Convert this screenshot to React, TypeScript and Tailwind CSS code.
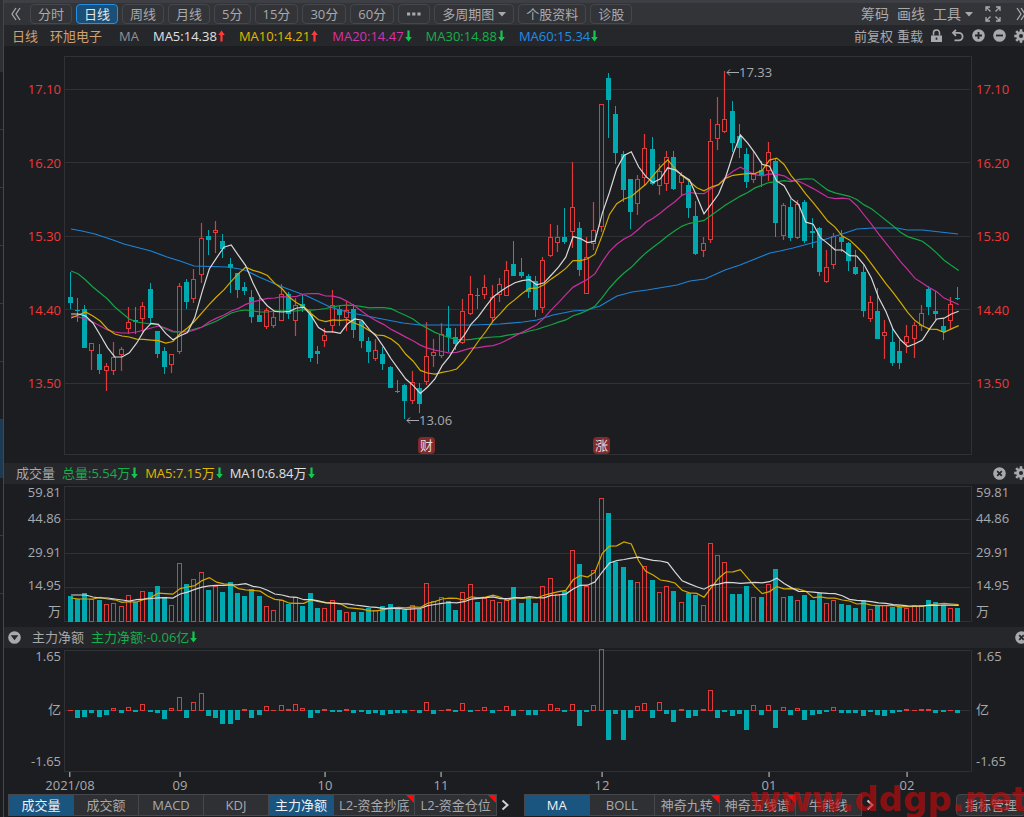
import type { ReactNode } from "react";
import { clsx } from "clsx";

// Each day: direction, high, body top, body bottom, low (chart units, y down),
// volume and main-force net flow (both in px above their baselines)
type Day = [dir: 0 | 1, high: number, top: number, bottom: number, low: number, vol: number, net: number];

const DAYS: Day[] = [
  [0, 272, 297, 303, 309, 26, 0], [0, 298, 310, 311, 322, 23, -8], [0, 305, 309, 348, 348, 29, -7],
  [1, 343, 343, 351, 370, 23, -3], [0, 344, 354, 370, 374, 22, -7], [1, 363, 366, 371, 391, 18, -5],
  [1, 342, 357, 371, 375, 19, 2], [1, 347, 349, 355, 371, 16, -3], [1, 307, 322, 329, 334, 27, 3],
  [0, 307, 320, 322, 334, 20, -2], [1, 302, 306, 319, 332, 31, 6], [0, 283, 289, 318, 324, 30, -2],
  [0, 331, 331, 354, 358, 36, -3], [0, 347, 351, 367, 374, 25, -9], [1, 354, 354, 365, 373, 17, 2],
  [1, 283, 286, 352, 354, 59, 13], [0, 279, 282, 302, 309, 38, -8], [1, 269, 279, 299, 303, 43, 8],
  [1, 223, 238, 275, 283, 50, 17], [0, 230, 236, 240, 255, 32, -6], [1, 221, 230, 233, 253, 36, -8],
  [0, 234, 241, 249, 258, 30, -14], [0, 258, 264, 268, 293, 40, -14], [0, 273, 273, 290, 298, 29, -10],
  [0, 282, 287, 291, 295, 26, 1], [0, 290, 297, 317, 323, 33, -8], [0, 298, 315, 322, 322, 26, -5],
  [1, 308, 310, 327, 329, 16, 4], [1, 312, 317, 326, 328, 12, 0], [1, 284, 294, 321, 321, 22, 5],
  [0, 292, 294, 314, 319, 18, 1], [1, 298, 305, 321, 336, 25, 6], [0, 294, 304, 307, 312, 16, 2],
  [0, 311, 314, 358, 362, 29, -8], [0, 346, 351, 354, 364, 14, -3], [1, 328, 335, 341, 347, 14, 1],
  [1, 290, 305, 326, 333, 22, -2], [0, 305, 309, 315, 326, 12, -2], [1, 302, 310, 318, 331, 10, 1],
  [0, 304, 309, 330, 338, 10, -3], [0, 320, 321, 341, 348, 10, -2], [0, 337, 341, 352, 363, 14, -4],
  [1, 339, 350, 359, 361, 12, -3], [0, 347, 354, 364, 370, 16, -5], [0, 366, 367, 388, 388, 18, -4],
  [0, 380, 391, 392, 393, 13, -3], [0, 384, 385, 401, 419, 12, -3], [1, 371, 382, 401, 404, 17, 0],
  [0, 383, 388, 404, 413, 13, -3], [1, 322, 356, 382, 385, 39, 8], [1, 339, 352, 356, 367, 21, -4],
  [1, 323, 334, 356, 358, 25, 0], [0, 306, 328, 337, 352, 21, 1], [0, 328, 337, 344, 350, 12, -2],
  [1, 299, 311, 343, 344, 30, 7], [1, 276, 294, 314, 315, 38, -2], [0, 288, 295, 296, 309, 20, 0],
  [1, 275, 287, 295, 299, 24, 3], [1, 285, 297, 318, 322, 22, -3], [1, 278, 284, 295, 302, 20, 0],
  [1, 261, 270, 296, 296, 22, 4], [0, 241, 264, 276, 276, 35, -6], [0, 258, 272, 276, 278, 19, 0],
  [0, 274, 276, 292, 298, 25, -5], [0, 276, 281, 310, 317, 19, -5], [1, 257, 260, 308, 313, 36, 0],
  [1, 224, 237, 256, 257, 44, 6], [1, 225, 237, 243, 252, 28, 2], [0, 208, 237, 242, 244, 31, -2],
  [1, 162, 207, 232, 248, 72, 6], [0, 222, 228, 270, 276, 58, -16], [1, 237, 257, 294, 294, 36, -2],
  [1, 202, 230, 244, 250, 52, 5], [1, 104, 104, 227, 232, 124, 61], [0, 73, 78, 100, 138, 109, -30],
  [0, 106, 114, 153, 164, 60, -4], [0, 151, 154, 190, 202, 55, -30], [0, 179, 179, 212, 229, 42, -8],
  [1, 175, 179, 204, 215, 40, 4], [1, 134, 148, 178, 186, 56, 7], [0, 137, 149, 184, 185, 42, -8],
  [1, 164, 171, 186, 195, 30, 8], [1, 151, 157, 184, 191, 36, -4], [0, 151, 157, 189, 190, 31, -12],
  [1, 172, 175, 183, 196, 20, 1], [0, 180, 185, 208, 218, 29, -8], [0, 201, 216, 254, 255, 27, -6],
  [1, 237, 243, 251, 257, 17, 1], [1, 119, 141, 240, 243, 79, 20], [1, 97, 124, 139, 150, 67, -8],
  [1, 71, 119, 132, 133, 60, -2], [0, 101, 111, 143, 152, 28, -6], [0, 124, 136, 148, 158, 28, -4],
  [0, 148, 154, 182, 188, 36, -20], [1, 151, 174, 180, 183, 25, 5], [0, 161, 170, 175, 187, 25, -5],
  [1, 142, 152, 171, 181, 38, 5], [0, 159, 161, 223, 237, 53, -18], [1, 203, 205, 236, 240, 25, 3],
  [0, 199, 207, 238, 241, 26, -5], [1, 200, 204, 238, 239, 22, 2], [0, 200, 202, 241, 243, 27, -10],
  [0, 218, 231, 233, 248, 22, -5], [0, 227, 228, 272, 276, 29, -4], [1, 250, 267, 282, 283, 19, -2],
  [1, 233, 236, 265, 269, 22, 3], [0, 230, 237, 242, 252, 18, -3], [0, 242, 243, 261, 271, 17, -3],
  [0, 250, 267, 274, 275, 14, -3], [0, 265, 272, 311, 317, 22, -6], [1, 296, 302, 319, 322, 13, -2],
  [0, 288, 311, 339, 339, 16, -5], [1, 320, 332, 336, 359, 17, -6], [0, 328, 342, 363, 366, 15, -3],
  [0, 340, 351, 363, 369, 15, -2], [1, 325, 336, 343, 353, 14, 1], [1, 322, 325, 339, 358, 17, 0],
  [1, 305, 313, 326, 331, 17, 1], [0, 286, 289, 307, 315, 22, 1], [0, 291, 311, 314, 320, 20, -3],
  [0, 318, 326, 332, 340, 17, -2], [1, 297, 304, 321, 329, 14, 0], [0, 287, 298, 299, 300, 14, -3],
];

// Averages for the first days, whose history lies left of the chart
const SEED5 = [314, 314, 316, 323];
const SEED10 = [318, 315, 312, 316, 321, 329, 334, 336, 337];
const SEED20 = [316, 317, 319, 322, 326, 330, 332, 333, 333, 332, 330, 328, 326, 328, 331, 332, 332, 330, 327];
const SEED30 = [
  271, 274, 280, 287, 293, 299, 307, 313, 319, 322, 323, 324, 325, 329, 332, 332, 331, 329, 327, 324, 321, 317, 313,
  311, 310, 311, 312, 312, 311,
];
const MA60 =
  "71,229 82,231 95,234 113,240 124,244 151,251 167,257 180,261 194,266 227,267 240,269 247,271 259,277 280,286 307,296 330,307 347,312 377,318 403,323 420,325 440,325 473,325 500,324 523,322 537,320 553,315 573,311 587,310 600,306 617,296 632,292 647,290 677,285 690,281 705,279 725,270 740,265 755,259 770,253 780,251 793,248 823,240 842,234 857,229 873,228 897,228 907,230 923,230 940,232 958,234";

const x = (i: number) => 70.6 + i * 7.275;

function average(values: number[], span: number, seed: number[]) {
  return values
    .map((_, i) => {
      const y =
        i < span - 1
          ? seed[i]
          : values.slice(i - span + 1, i + 1).reduce((a, b) => a + b, 0) / span;
      return `${(x(i) + 0.5).toFixed(1)},${y.toFixed(1)}`;
    })
    .join(" ");
}

const closes = DAYS.map(([up, , top, bottom]) => (up ? top : bottom));
const volumes = DAYS.map((d) => 622 - d[5]);

const PRICE_LINES = [
  { points: MA60, color: "#1c84d8" },
  { points: average(closes, 30, SEED30), color: "#12a544" },
  { points: average(closes, 20, SEED20), color: "#c72f9c" },
  { points: average(closes, 10, SEED10), color: "#d3ab00" },
  { points: average(closes, 5, SEED5), color: "#d8d8d8" },
];
const VOLUME_LINES = [
  { points: average(volumes, 5, [598, 599, 599, 599]), color: "#d3ab00" },
  { points: average(volumes, 10, [595, 595, 595, 597, 598, 598, 599, 600, 601]), color: "#d8d8d8" },
];

const MONTHS = [
  { at: 70, label: "2021/08" },
  { at: 180, label: "09" },
  { at: 325, label: "10" },
  { at: 441, label: "11" },
  { at: 602, label: "12" },
  { at: 769, label: "01" },
  { at: 907, label: "02" },
];

const UP = "#e23a3a";
const DOWN = "#00a9b0";
const GRID = "#303135";

const left = (px: number) => `${((px - 64) / 908) * 100}%`;

function TrendArrow({ up }: { up?: boolean }) {
  return (
    <svg viewBox="0 0 7 12" className={clsx("h-3 w-[7px]", up ? "text-[#ff3b3b]" : "rotate-180 text-[#12c950]")}>
      <path d="M3.5 0.5 6.8 5H4.6v6.5H2.4V5H0.2z" fill="currentColor" />
    </svg>
  );
}

function Reading({ up, className, children }: { up?: boolean; className: string; children: ReactNode }) {
  return (
    <span className={clsx("flex items-center gap-px whitespace-nowrap", className)}>
      {children}
      <TrendArrow up={up} />
    </span>
  );
}

function Chevrons({ right }: { right?: boolean }) {
  return (
    <svg viewBox="0 0 12 14" className={clsx("h-3.5 w-3", right && "rotate-180")} fill="none" stroke="currentColor" strokeWidth="1.3">
      <path d="M6 1 2 7l4 6M10 1 6 7l4 6" />
    </svg>
  );
}

function Caret() {
  return (
    <svg viewBox="0 0 8 5" className="h-[5px] w-2" fill="currentColor">
      <path d="M0 0h8L4 4.6z" />
    </svg>
  );
}

function Gear() {
  return (
    <svg viewBox="0 0 14 14" className="size-3.5">
      {[0, 45, 90, 135].map((deg) => (
        <rect key={deg} x="5.7" y="0.2" width="2.6" height="13.6" fill="currentColor" transform={`rotate(${deg} 7 7)`} />
      ))}
      <circle cx="7" cy="7" r="4.8" fill="currentColor" />
      <circle cx="7" cy="7" r="2" fill="#26272b" />
    </svg>
  );
}

function Disc({ d, solid }: { d: string; solid?: boolean }) {
  return (
    <svg viewBox="0 0 13 13" className="size-[13px]">
      <circle cx="6.5" cy="6.5" r="6.3" fill="currentColor" />
      <path d={d} stroke="#26272b" strokeWidth="1.8" fill={solid ? "#26272b" : "none"} />
    </svg>
  );
}

const CROSS = "M4.2 4.2l4.6 4.6M8.8 4.2 4.2 8.8";

function ToolButton({ label, active, children }: { label?: string; active?: boolean; children: ReactNode }) {
  return (
    <button
      aria-label={label}
      className={clsx(
        "flex h-5 shrink-0 items-center gap-1 rounded-sm border px-[7px] whitespace-nowrap",
        active ? "border-[#2190e6] bg-[#1a4f78] text-[#e6e6e6]" : "border-[#46474c] bg-[#333438]",
      )}
    >
      {children}
    </button>
  );
}

function TopBar() {
  return (
    <div className="flex h-[25px] items-center overflow-hidden border-t-[3px] border-[#3e3f44] bg-[#333438] pl-1.5">
      <button aria-label="收起" className="mr-2 flex">
        <Chevrons />
      </button>
      <div className="flex gap-1">
        <ToolButton>分时</ToolButton>
        <ToolButton active>日线</ToolButton>
        <ToolButton>周线</ToolButton>
        <ToolButton>月线</ToolButton>
        <ToolButton>5分</ToolButton>
        <ToolButton>15分</ToolButton>
        <ToolButton>30分</ToolButton>
        <ToolButton>60分</ToolButton>
        <ToolButton label="更多">
          <svg viewBox="0 0 16 4" className="h-1 w-4" fill="currentColor">
            <path d="M1 .5h3.2v3H1zM6.2.5h3.2v3H6.2zM11.4.5h3.2v3h-3.2z" />
          </svg>
        </ToolButton>
        <ToolButton>
          多周期图
          <Caret />
        </ToolButton>
        <ToolButton>个股资料</ToolButton>
        <ToolButton>诊股</ToolButton>
      </div>
      <div className="-mr-[3px] ml-auto flex items-center text-sm">
        <button className="mr-2">筹码</button>
        <button className="mr-2">画线</button>
        <button className="mr-3 flex items-center gap-1">
          工具
          <Caret />
        </button>
        <button aria-label="全屏" className="mr-3.5">
          <svg viewBox="0 0 16 16" className="size-4" fill="none" stroke="currentColor" strokeWidth="1.3">
            <path d="M1 5V1h4M1 1l4.5 4.5M11 1h4v4M15 1l-4.5 4.5M1 11v4h4M1 15l4.5-4.5M15 11v4h-4M15 15l-4.5-4.5" />
          </svg>
        </button>
        <button aria-label="展开">
          <Chevrons right />
        </button>
      </div>
    </div>
  );
}

function InfoBar() {
  return (
    <div className="flex h-[21px] items-center overflow-hidden bg-[#26272b] pl-2">
      <span className="text-[#d0a070]">日线</span>
      <span className="ml-3 text-[#d0a070]">环旭电子</span>
      <span className="mr-3.5 ml-[17px] text-[#909195]">MA</span>
      <div className="flex gap-3.5">
        <Reading up className="text-[#e0e0e0]">MA5:14.38</Reading>
        <Reading up className="text-[#e0b800]">MA10:14.21</Reading>
        <Reading className="text-[#d633a8]">MA20:14.47</Reading>
        <Reading className="text-[#14b04a]">MA30:14.88</Reading>
        <Reading className="text-[#1f8de6]">MA60:15.34</Reading>
      </div>
      <div className="-mr-1 ml-auto flex items-center gap-2">
        <button className="-mr-1">前复权</button>
        <button className="-mr-px">重载</button>
        <button aria-label="锁定">
          <svg viewBox="0 0 13 14" className="h-3.5 w-[13px]">
            <path d="M3.5 6.5V4.2a3 3 0 0 1 6-.4v2.7" fill="none" stroke="currentColor" strokeWidth="1.5" />
            <path d="M1 6.5h11V13H1z" fill="currentColor" />
            <path d="M5.7 8.6h1.6v2.2H5.7z" fill="#26272b" />
          </svg>
        </button>
        <button aria-label="撤销">
          <svg viewBox="0 0 13 13" className="size-[13px]" fill="none" stroke="currentColor" strokeWidth="1.8">
            <path d="M5 .8 2 3.8l3 3M2.2 3.8h5.6a3.8 3.8 0 0 1 0 7.6H3.5" />
          </svg>
        </button>
        <button aria-label="放大">
          <Disc d="M6.5 3v7M3 6.5h7" />
        </button>
        <button aria-label="缩小">
          <Disc d="M3 6.5h7" />
        </button>
        <button aria-label="设置">
          <Gear />
        </button>
      </div>
    </div>
  );
}

function Frame({ top, height, lines, children }: { top: number; height: number; lines: number[]; children: ReactNode }) {
  return (
    <>
      <g stroke={GRID} fill="none">
        <path d={`M64.5 ${top + 0.5}H970.5M64.5 ${top + height - 0.5}H970.5M64.5 ${top}v${height}M971.5 ${top}v${height}`} />
        {lines.map((y) => (
          <path key={y} d={`M65 ${y + 0.5}H970`} />
        ))}
      </g>
      {children}
    </>
  );
}

function Lines({ lines }: { lines: { points: string; color: string }[] }) {
  return lines.map((l) => <polyline key={l.color} points={l.points} fill="none" stroke={l.color} strokeWidth="1.2" />);
}

function PricePanel() {
  const labels = ["17.10", "16.20", "15.30", "14.40", "13.50"];
  const scale = "flex h-[337px] flex-col justify-between pt-[23px] leading-5";
  return (
    <section className="flex pt-2.5 pb-2 text-[#f03838]">
      <div className={clsx(scale, "w-[60px] pr-[3px] text-right")}>
        {labels.map((l) => (
          <span key={l}>{l}</span>
        ))}
      </div>
      <div className="relative min-w-0 flex-1 text-[#a8a9ac]">
        <svg viewBox="64 56 908 399" preserveAspectRatio="none" className="block h-[399px] w-full">
          <Frame top={56} height={399} lines={[89, 162, 236, 309, 383]}>
            {DAYS.map(([up, high, top, bottom, low], i) => {
              const c = Math.round(x(i));
              const h = Math.max(bottom - top, 1);
              return up ? (
                <g key={i} stroke={UP} fill="none">
                  <path d={`M${c - 0.5} ${high}V${top}M${c - 0.5} ${bottom}V${low}`} strokeWidth="1.2" />
                  <rect x={c - 2.5} y={top + 0.5} width="4" height={Math.max(h - 1, 1)} />
                </g>
              ) : (
                <g key={i} fill={DOWN}>
                  <rect x={c - 1} y={high} width="1" height={low - high} />
                  <rect x={c - 3} y={top} width="5" height={h} />
                </g>
              );
            })}
            <Lines lines={PRICE_LINES} />
          </Frame>
        </svg>
        <Callout at={726} top={6}>17.33</Callout>
        <Callout at={406} top={354}>13.06</Callout>
        <Flag at={418}>财</Flag>
        <Flag at={593}>涨</Flag>
      </div>
      <div className={clsx(scale, "w-[52px] pl-1")}>
        {labels.map((l) => (
          <span key={l}>{l}</span>
        ))}
      </div>
    </section>
  );
}

function Callout({ at, top, children }: { at: number; top: number; children: ReactNode }) {
  return (
    <span className="absolute flex items-center leading-5" style={{ left: left(at), top }}>
      <svg viewBox="0 0 13 8" className="h-2 w-[13px]" fill="none" stroke="currentColor">
        <path d="M4 1.5 1 4.5l3 3M1 4.5h12" />
      </svg>
      {children}
    </span>
  );
}

function Flag({ at, children }: { at: number; children: ReactNode }) {
  return (
    <span
      className="absolute bottom-px size-[17px] rounded-sm bg-[#842a2d] text-center leading-4 text-[#e4dcdc]"
      style={{ left: left(at) }}
    >
      {children}
    </span>
  );
}

function VolumePanel() {
  const labels = ["59.81", "44.86", "29.91", "14.95", "万"];
  const rows = "grid grid-rows-[26px_34px_33px_26px_16px] leading-4";
  return (
    <section>
      <header className="flex h-[21px] items-center gap-[7px] overflow-hidden bg-[#26272b] pb-px pl-3">
        <h2 className="text-[#a8a9ac]">成交量</h2>
        <Reading className="text-[#14b04a]">总量:5.54万</Reading>
        <Reading className="text-[#e0b800]">MA5:7.15万</Reading>
        <Reading className="text-[#e0e0e0]">MA10:6.84万</Reading>
        <div className="-mr-1 ml-auto flex items-center gap-2">
          <button aria-label="关闭成交量">
            <Disc d={CROSS} />
          </button>
          <button aria-label="成交量设置">
            <Gear />
          </button>
        </div>
      </header>
      <div className="flex pb-1">
        <div className={clsx(rows, "w-[60px] pr-[3px] text-right")}>
          {labels.map((l) => (
            <span key={l}>{l}</span>
          ))}
        </div>
        <svg viewBox="64 484 908 139" preserveAspectRatio="none" className="block h-[139px] min-w-0 flex-1">
          <Frame top={486} height={136} lines={[519, 553, 587]}>
            {DAYS.map(([up, , , , , vol], i) => {
              const c = Math.round(x(i));
              return up ? (
                <rect key={i} x={c - 2.5} y={622.5 - vol} width="4" height={vol - 1} fill="none" stroke={UP} />
              ) : (
                <rect key={i} x={c - 3} y={622 - vol} width="5" height={vol} fill={DOWN} />
              );
            })}
            <Lines lines={VOLUME_LINES} />
          </Frame>
        </svg>
        <div className={clsx(rows, "w-[52px] pl-1")}>
          {labels.map((l) => (
            <span key={l}>{l}</span>
          ))}
        </div>
      </div>
    </section>
  );
}

function NetPanel() {
  const labels = ["1.65", "亿", "-1.65"];
  const scale = "flex flex-col justify-between pb-[3px] leading-4";
  return (
    <section>
      <header className="flex h-[21px] items-center gap-[7px] overflow-hidden bg-[#26272b] pb-px pl-1">
        <button aria-label="选择指标">
          <Disc d="M4.5 5.2h4l-2 2.6z" solid />
        </button>
        <h2 className="ml-1 text-[#a8a9ac]">主力净额</h2>
        <Reading className="text-[#14b04a]">主力净额:-0.06亿</Reading>
        <button aria-label="关闭主力净额" className="-mr-1 ml-auto">
          <Disc d={CROSS} />
        </button>
      </header>
      <div className="flex">
        <div className={clsx(scale, "w-[60px] pr-[3px] text-right")}>
          {labels.map((l) => (
            <span key={l}>{l}</span>
          ))}
        </div>
        <svg viewBox="64 648 908 124" preserveAspectRatio="none" className="block h-[124px] min-w-0 flex-1">
          <Frame top={650} height={122} lines={[710]}>
            {DAYS.map(([, , , , , , net], i) => {
              const c = Math.round(x(i));
              if (net < 0) return <rect key={i} x={c - 3} y="710" width="5" height={-net} fill={DOWN} />;
              if (net < 2) return <rect key={i} x={c - 3} y={710 - net} width="5" height={net + 1} fill={UP} />;
              return <rect key={i} x={c - 2.5} y={710.5 - net} width="4" height={net} fill="none" stroke={UP} />;
            })}
          </Frame>
        </svg>
        <div className={clsx(scale, "w-[52px] pl-1")}>
          {labels.map((l) => (
            <span key={l}>{l}</span>
          ))}
        </div>
      </div>
      <div className="relative mr-[52px] ml-[60px] h-[22px]">
        {MONTHS.map((m) => (
          <span
            key={m.label}
            className="absolute flex -translate-x-1/2 flex-col items-center leading-4 before:h-[5px] before:w-px before:bg-[#d0d0d0]"
            style={{ left: left(m.at) }}
          >
            {m.label}
          </span>
        ))}
      </div>
    </section>
  );
}

function Tab({ active, hot, wide, children }: { active?: boolean; hot?: boolean; wide?: boolean; children: ReactNode }) {
  return (
    <button
      className={clsx(
        "relative h-5 shrink-0 border-r border-[#46474c] pb-0.5 text-center whitespace-nowrap last:border-r-0",
        wide ? "px-[5px]" : "min-w-[65px]",
        active ? "bg-[#1a5580] text-[#f0f0f0]" : "bg-[#2f3034]",
      )}
    >
      {children}
      {hot && (
        <span className="absolute top-0 right-0 border-t-8 border-l-8 border-t-[#ff0a0a] border-l-transparent" />
      )}
    </button>
  );
}

function More() {
  return (
    <button aria-label="更多指标" className="px-1 text-[#d0d0d0]">
      <svg viewBox="0 0 9 12" className="h-3 w-[9px]" fill="none" stroke="currentColor" strokeWidth="2">
        <path d="M1.5 1.5 6.5 6l-5 4.5" />
      </svg>
    </button>
  );
}

function IndicatorTabs() {
  return (
    <nav className="flex h-[23px] items-start overflow-hidden pl-1">
      <div className="flex shrink-0 border border-[#46474c]">
        <Tab active>成交量</Tab>
        <Tab>成交额</Tab>
        <Tab>MACD</Tab>
        <Tab>KDJ</Tab>
        <Tab active>主力净额</Tab>
        <Tab wide hot>L2-资金抄底</Tab>
        <Tab wide hot>L2-资金仓位</Tab>
      </div>
      <div className="mr-2.5 flex h-[22px] items-center">
        <More />
      </div>
      <div className="flex shrink-0 border border-[#46474c]">
        <Tab active>MA</Tab>
        <Tab>BOLL</Tab>
        <Tab hot>神奇九转</Tab>
        <Tab wide hot>神奇五线谱</Tab>
        <Tab>牛熊线</Tab>
      </div>
      <div className="flex h-[22px] items-center">
        <More />
      </div>
      <button className="-mr-0.5 ml-auto h-[22px] shrink-0 rounded-sm border border-[#46474c] bg-[#2f3034] px-2 pb-0.5">
        指标管理
      </button>
    </nav>
  );
}

export default function App() {
  return (
    <div className="relative flex overflow-hidden bg-[#1c1d21] font-['Open_Sans','Noto_Sans_CJK_SC',sans-serif] text-[13px] leading-5 text-[#a8a9ac]">
      {/* Edge of the stock list next to the chart */}
      <div className="flex w-1 shrink-0 flex-col border-r border-[#46474c]">
        <div className="h-[72px] bg-[#2e2f33]" />
        {[0, 1, 2, 3, 4, 5].map((n) => (
          <div key={n} className="h-[58px] border-b border-[#38393d]" />
        ))}
        <div className="h-[58px] bg-[#1d3a52]" />
        <div className="h-[58px] border-b border-[#38393d]" />
        <div className="h-[58px] border-b border-[#38393d]" />
      </div>
      <main className="min-w-0 flex-1">
        <TopBar />
        <InfoBar />
        <PricePanel />
        <VolumePanel />
        <NetPanel />
        <IndicatorTabs />
      </main>
      <span className="pointer-events-none absolute -right-1 bottom-0 font-['DejaVu_Sans'] text-[34px] leading-9 font-bold text-[#c80a0a]/65">
        www.ddgp.net
      </span>
    </div>
  );
}
